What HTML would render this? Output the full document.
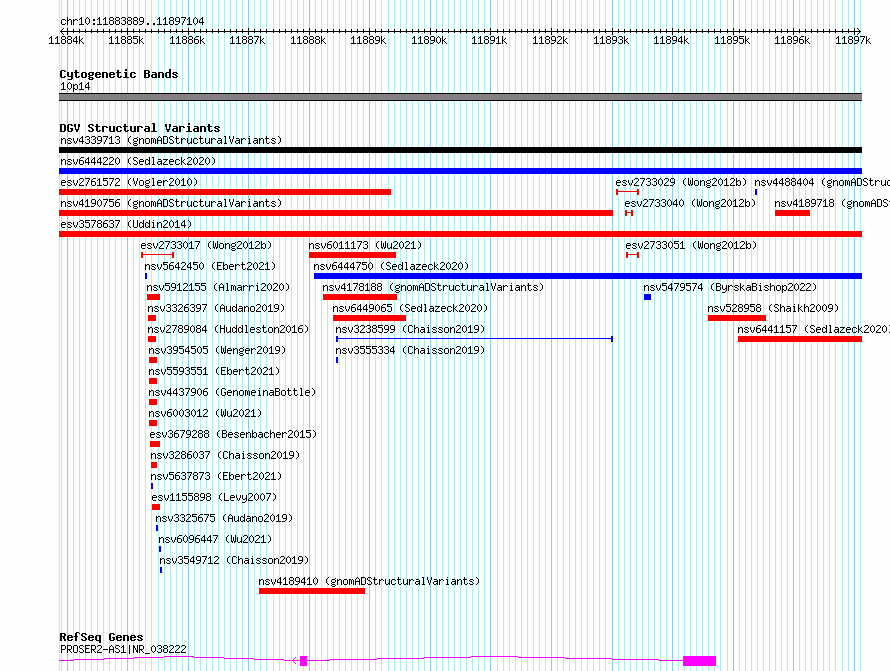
<!DOCTYPE html><html><head><meta charset="utf-8"><style>
html,body{margin:0;padding:0;background:#fcfefc;width:890px;height:671px;overflow:hidden}
svg{position:absolute;left:0;top:0}
</style></head><body>
<svg width="890" height="671" viewBox="0 0 890 671" shape-rendering="crispEdges">
<rect x="59" y="0" width="1" height="671" fill="#afeeee"/>
<rect x="61" y="0" width="1" height="671" fill="#afeeee"/>
<rect x="67" y="0" width="1" height="671" fill="#87ceeb"/>
<rect x="73" y="0" width="1" height="671" fill="#afeeee"/>
<rect x="79" y="0" width="1" height="671" fill="#afeeee"/>
<rect x="85" y="0" width="1" height="671" fill="#afeeee"/>
<rect x="91" y="0" width="1" height="671" fill="#afeeee"/>
<rect x="97" y="0" width="1" height="671" fill="#afeeee"/>
<rect x="103" y="0" width="1" height="671" fill="#afeeee"/>
<rect x="109" y="0" width="1" height="671" fill="#afeeee"/>
<rect x="115" y="0" width="1" height="671" fill="#afeeee"/>
<rect x="121" y="0" width="1" height="671" fill="#afeeee"/>
<rect x="127" y="0" width="1" height="671" fill="#87ceeb"/>
<rect x="133" y="0" width="1" height="671" fill="#afeeee"/>
<rect x="139" y="0" width="1" height="671" fill="#afeeee"/>
<rect x="145" y="0" width="1" height="671" fill="#afeeee"/>
<rect x="151" y="0" width="1" height="671" fill="#afeeee"/>
<rect x="158" y="0" width="1" height="671" fill="#afeeee"/>
<rect x="164" y="0" width="1" height="671" fill="#afeeee"/>
<rect x="170" y="0" width="1" height="671" fill="#afeeee"/>
<rect x="176" y="0" width="1" height="671" fill="#afeeee"/>
<rect x="182" y="0" width="1" height="671" fill="#afeeee"/>
<rect x="188" y="0" width="1" height="671" fill="#87ceeb"/>
<rect x="194" y="0" width="1" height="671" fill="#afeeee"/>
<rect x="200" y="0" width="1" height="671" fill="#afeeee"/>
<rect x="206" y="0" width="1" height="671" fill="#afeeee"/>
<rect x="212" y="0" width="1" height="671" fill="#afeeee"/>
<rect x="218" y="0" width="1" height="671" fill="#afeeee"/>
<rect x="224" y="0" width="1" height="671" fill="#afeeee"/>
<rect x="230" y="0" width="1" height="671" fill="#afeeee"/>
<rect x="236" y="0" width="1" height="671" fill="#afeeee"/>
<rect x="242" y="0" width="1" height="671" fill="#afeeee"/>
<rect x="248" y="0" width="1" height="671" fill="#87ceeb"/>
<rect x="254" y="0" width="1" height="671" fill="#afeeee"/>
<rect x="260" y="0" width="1" height="671" fill="#afeeee"/>
<rect x="266" y="0" width="1" height="671" fill="#afeeee"/>
<rect x="273" y="0" width="1" height="671" fill="#afeeee"/>
<rect x="279" y="0" width="1" height="671" fill="#afeeee"/>
<rect x="285" y="0" width="1" height="671" fill="#afeeee"/>
<rect x="291" y="0" width="1" height="671" fill="#afeeee"/>
<rect x="297" y="0" width="1" height="671" fill="#afeeee"/>
<rect x="303" y="0" width="1" height="671" fill="#afeeee"/>
<rect x="309" y="0" width="1" height="671" fill="#87ceeb"/>
<rect x="315" y="0" width="1" height="671" fill="#afeeee"/>
<rect x="321" y="0" width="1" height="671" fill="#afeeee"/>
<rect x="327" y="0" width="1" height="671" fill="#afeeee"/>
<rect x="333" y="0" width="1" height="671" fill="#afeeee"/>
<rect x="339" y="0" width="1" height="671" fill="#afeeee"/>
<rect x="345" y="0" width="1" height="671" fill="#afeeee"/>
<rect x="351" y="0" width="1" height="671" fill="#afeeee"/>
<rect x="357" y="0" width="1" height="671" fill="#afeeee"/>
<rect x="363" y="0" width="1" height="671" fill="#afeeee"/>
<rect x="369" y="0" width="1" height="671" fill="#87ceeb"/>
<rect x="375" y="0" width="1" height="671" fill="#afeeee"/>
<rect x="381" y="0" width="1" height="671" fill="#afeeee"/>
<rect x="388" y="0" width="1" height="671" fill="#afeeee"/>
<rect x="394" y="0" width="1" height="671" fill="#afeeee"/>
<rect x="400" y="0" width="1" height="671" fill="#afeeee"/>
<rect x="406" y="0" width="1" height="671" fill="#afeeee"/>
<rect x="412" y="0" width="1" height="671" fill="#afeeee"/>
<rect x="418" y="0" width="1" height="671" fill="#afeeee"/>
<rect x="424" y="0" width="1" height="671" fill="#afeeee"/>
<rect x="430" y="0" width="1" height="671" fill="#87ceeb"/>
<rect x="436" y="0" width="1" height="671" fill="#afeeee"/>
<rect x="442" y="0" width="1" height="671" fill="#afeeee"/>
<rect x="448" y="0" width="1" height="671" fill="#afeeee"/>
<rect x="454" y="0" width="1" height="671" fill="#afeeee"/>
<rect x="460" y="0" width="1" height="671" fill="#afeeee"/>
<rect x="466" y="0" width="1" height="671" fill="#afeeee"/>
<rect x="472" y="0" width="1" height="671" fill="#afeeee"/>
<rect x="478" y="0" width="1" height="671" fill="#afeeee"/>
<rect x="484" y="0" width="1" height="671" fill="#afeeee"/>
<rect x="490" y="0" width="1" height="671" fill="#87ceeb"/>
<rect x="497" y="0" width="1" height="671" fill="#afeeee"/>
<rect x="503" y="0" width="1" height="671" fill="#afeeee"/>
<rect x="509" y="0" width="1" height="671" fill="#afeeee"/>
<rect x="515" y="0" width="1" height="671" fill="#afeeee"/>
<rect x="521" y="0" width="1" height="671" fill="#afeeee"/>
<rect x="527" y="0" width="1" height="671" fill="#afeeee"/>
<rect x="533" y="0" width="1" height="671" fill="#afeeee"/>
<rect x="539" y="0" width="1" height="671" fill="#afeeee"/>
<rect x="545" y="0" width="1" height="671" fill="#afeeee"/>
<rect x="551" y="0" width="1" height="671" fill="#87ceeb"/>
<rect x="557" y="0" width="1" height="671" fill="#afeeee"/>
<rect x="563" y="0" width="1" height="671" fill="#afeeee"/>
<rect x="569" y="0" width="1" height="671" fill="#afeeee"/>
<rect x="575" y="0" width="1" height="671" fill="#afeeee"/>
<rect x="581" y="0" width="1" height="671" fill="#afeeee"/>
<rect x="587" y="0" width="1" height="671" fill="#afeeee"/>
<rect x="593" y="0" width="1" height="671" fill="#afeeee"/>
<rect x="599" y="0" width="1" height="671" fill="#afeeee"/>
<rect x="605" y="0" width="1" height="671" fill="#afeeee"/>
<rect x="612" y="0" width="1" height="671" fill="#87ceeb"/>
<rect x="618" y="0" width="1" height="671" fill="#afeeee"/>
<rect x="624" y="0" width="1" height="671" fill="#afeeee"/>
<rect x="630" y="0" width="1" height="671" fill="#afeeee"/>
<rect x="636" y="0" width="1" height="671" fill="#afeeee"/>
<rect x="642" y="0" width="1" height="671" fill="#afeeee"/>
<rect x="648" y="0" width="1" height="671" fill="#afeeee"/>
<rect x="654" y="0" width="1" height="671" fill="#afeeee"/>
<rect x="660" y="0" width="1" height="671" fill="#afeeee"/>
<rect x="666" y="0" width="1" height="671" fill="#afeeee"/>
<rect x="672" y="0" width="1" height="671" fill="#87ceeb"/>
<rect x="678" y="0" width="1" height="671" fill="#afeeee"/>
<rect x="684" y="0" width="1" height="671" fill="#afeeee"/>
<rect x="690" y="0" width="1" height="671" fill="#afeeee"/>
<rect x="696" y="0" width="1" height="671" fill="#afeeee"/>
<rect x="702" y="0" width="1" height="671" fill="#afeeee"/>
<rect x="708" y="0" width="1" height="671" fill="#afeeee"/>
<rect x="714" y="0" width="1" height="671" fill="#afeeee"/>
<rect x="720" y="0" width="1" height="671" fill="#afeeee"/>
<rect x="727" y="0" width="1" height="671" fill="#afeeee"/>
<rect x="733" y="0" width="1" height="671" fill="#87ceeb"/>
<rect x="739" y="0" width="1" height="671" fill="#afeeee"/>
<rect x="745" y="0" width="1" height="671" fill="#afeeee"/>
<rect x="751" y="0" width="1" height="671" fill="#afeeee"/>
<rect x="757" y="0" width="1" height="671" fill="#afeeee"/>
<rect x="763" y="0" width="1" height="671" fill="#afeeee"/>
<rect x="769" y="0" width="1" height="671" fill="#afeeee"/>
<rect x="775" y="0" width="1" height="671" fill="#afeeee"/>
<rect x="781" y="0" width="1" height="671" fill="#afeeee"/>
<rect x="787" y="0" width="1" height="671" fill="#afeeee"/>
<rect x="793" y="0" width="1" height="671" fill="#87ceeb"/>
<rect x="799" y="0" width="1" height="671" fill="#afeeee"/>
<rect x="805" y="0" width="1" height="671" fill="#afeeee"/>
<rect x="811" y="0" width="1" height="671" fill="#afeeee"/>
<rect x="817" y="0" width="1" height="671" fill="#afeeee"/>
<rect x="823" y="0" width="1" height="671" fill="#afeeee"/>
<rect x="829" y="0" width="1" height="671" fill="#afeeee"/>
<rect x="835" y="0" width="1" height="671" fill="#afeeee"/>
<rect x="842" y="0" width="1" height="671" fill="#afeeee"/>
<rect x="848" y="0" width="1" height="671" fill="#afeeee"/>
<rect x="854" y="0" width="1" height="671" fill="#87ceeb"/>
<rect x="860" y="0" width="1" height="671" fill="#afeeee"/>
<rect x="60" y="31" width="801" height="1" fill="#000000"/>
<rect x="67" y="28" width="1" height="7" fill="#000000"/>
<rect x="73" y="29" width="1" height="4" fill="#000000"/>
<rect x="79" y="29" width="1" height="4" fill="#000000"/>
<rect x="85" y="29" width="1" height="4" fill="#000000"/>
<rect x="91" y="29" width="1" height="4" fill="#000000"/>
<rect x="97" y="29" width="1" height="4" fill="#000000"/>
<rect x="103" y="29" width="1" height="4" fill="#000000"/>
<rect x="109" y="29" width="1" height="4" fill="#000000"/>
<rect x="115" y="29" width="1" height="4" fill="#000000"/>
<rect x="121" y="29" width="1" height="4" fill="#000000"/>
<rect x="127" y="28" width="1" height="7" fill="#000000"/>
<rect x="133" y="29" width="1" height="4" fill="#000000"/>
<rect x="139" y="29" width="1" height="4" fill="#000000"/>
<rect x="145" y="29" width="1" height="4" fill="#000000"/>
<rect x="151" y="29" width="1" height="4" fill="#000000"/>
<rect x="158" y="29" width="1" height="4" fill="#000000"/>
<rect x="164" y="29" width="1" height="4" fill="#000000"/>
<rect x="170" y="29" width="1" height="4" fill="#000000"/>
<rect x="176" y="29" width="1" height="4" fill="#000000"/>
<rect x="182" y="29" width="1" height="4" fill="#000000"/>
<rect x="188" y="28" width="1" height="7" fill="#000000"/>
<rect x="194" y="29" width="1" height="4" fill="#000000"/>
<rect x="200" y="29" width="1" height="4" fill="#000000"/>
<rect x="206" y="29" width="1" height="4" fill="#000000"/>
<rect x="212" y="29" width="1" height="4" fill="#000000"/>
<rect x="218" y="29" width="1" height="4" fill="#000000"/>
<rect x="224" y="29" width="1" height="4" fill="#000000"/>
<rect x="230" y="29" width="1" height="4" fill="#000000"/>
<rect x="236" y="29" width="1" height="4" fill="#000000"/>
<rect x="242" y="29" width="1" height="4" fill="#000000"/>
<rect x="248" y="28" width="1" height="7" fill="#000000"/>
<rect x="254" y="29" width="1" height="4" fill="#000000"/>
<rect x="260" y="29" width="1" height="4" fill="#000000"/>
<rect x="266" y="29" width="1" height="4" fill="#000000"/>
<rect x="273" y="29" width="1" height="4" fill="#000000"/>
<rect x="279" y="29" width="1" height="4" fill="#000000"/>
<rect x="285" y="29" width="1" height="4" fill="#000000"/>
<rect x="291" y="29" width="1" height="4" fill="#000000"/>
<rect x="297" y="29" width="1" height="4" fill="#000000"/>
<rect x="303" y="29" width="1" height="4" fill="#000000"/>
<rect x="309" y="28" width="1" height="7" fill="#000000"/>
<rect x="315" y="29" width="1" height="4" fill="#000000"/>
<rect x="321" y="29" width="1" height="4" fill="#000000"/>
<rect x="327" y="29" width="1" height="4" fill="#000000"/>
<rect x="333" y="29" width="1" height="4" fill="#000000"/>
<rect x="339" y="29" width="1" height="4" fill="#000000"/>
<rect x="345" y="29" width="1" height="4" fill="#000000"/>
<rect x="351" y="29" width="1" height="4" fill="#000000"/>
<rect x="357" y="29" width="1" height="4" fill="#000000"/>
<rect x="363" y="29" width="1" height="4" fill="#000000"/>
<rect x="369" y="28" width="1" height="7" fill="#000000"/>
<rect x="375" y="29" width="1" height="4" fill="#000000"/>
<rect x="381" y="29" width="1" height="4" fill="#000000"/>
<rect x="388" y="29" width="1" height="4" fill="#000000"/>
<rect x="394" y="29" width="1" height="4" fill="#000000"/>
<rect x="400" y="29" width="1" height="4" fill="#000000"/>
<rect x="406" y="29" width="1" height="4" fill="#000000"/>
<rect x="412" y="29" width="1" height="4" fill="#000000"/>
<rect x="418" y="29" width="1" height="4" fill="#000000"/>
<rect x="424" y="29" width="1" height="4" fill="#000000"/>
<rect x="430" y="28" width="1" height="7" fill="#000000"/>
<rect x="436" y="29" width="1" height="4" fill="#000000"/>
<rect x="442" y="29" width="1" height="4" fill="#000000"/>
<rect x="448" y="29" width="1" height="4" fill="#000000"/>
<rect x="454" y="29" width="1" height="4" fill="#000000"/>
<rect x="460" y="29" width="1" height="4" fill="#000000"/>
<rect x="466" y="29" width="1" height="4" fill="#000000"/>
<rect x="472" y="29" width="1" height="4" fill="#000000"/>
<rect x="478" y="29" width="1" height="4" fill="#000000"/>
<rect x="484" y="29" width="1" height="4" fill="#000000"/>
<rect x="490" y="28" width="1" height="7" fill="#000000"/>
<rect x="497" y="29" width="1" height="4" fill="#000000"/>
<rect x="503" y="29" width="1" height="4" fill="#000000"/>
<rect x="509" y="29" width="1" height="4" fill="#000000"/>
<rect x="515" y="29" width="1" height="4" fill="#000000"/>
<rect x="521" y="29" width="1" height="4" fill="#000000"/>
<rect x="527" y="29" width="1" height="4" fill="#000000"/>
<rect x="533" y="29" width="1" height="4" fill="#000000"/>
<rect x="539" y="29" width="1" height="4" fill="#000000"/>
<rect x="545" y="29" width="1" height="4" fill="#000000"/>
<rect x="551" y="28" width="1" height="7" fill="#000000"/>
<rect x="557" y="29" width="1" height="4" fill="#000000"/>
<rect x="563" y="29" width="1" height="4" fill="#000000"/>
<rect x="569" y="29" width="1" height="4" fill="#000000"/>
<rect x="575" y="29" width="1" height="4" fill="#000000"/>
<rect x="581" y="29" width="1" height="4" fill="#000000"/>
<rect x="587" y="29" width="1" height="4" fill="#000000"/>
<rect x="593" y="29" width="1" height="4" fill="#000000"/>
<rect x="599" y="29" width="1" height="4" fill="#000000"/>
<rect x="605" y="29" width="1" height="4" fill="#000000"/>
<rect x="612" y="28" width="1" height="7" fill="#000000"/>
<rect x="618" y="29" width="1" height="4" fill="#000000"/>
<rect x="624" y="29" width="1" height="4" fill="#000000"/>
<rect x="630" y="29" width="1" height="4" fill="#000000"/>
<rect x="636" y="29" width="1" height="4" fill="#000000"/>
<rect x="642" y="29" width="1" height="4" fill="#000000"/>
<rect x="648" y="29" width="1" height="4" fill="#000000"/>
<rect x="654" y="29" width="1" height="4" fill="#000000"/>
<rect x="660" y="29" width="1" height="4" fill="#000000"/>
<rect x="666" y="29" width="1" height="4" fill="#000000"/>
<rect x="672" y="28" width="1" height="7" fill="#000000"/>
<rect x="678" y="29" width="1" height="4" fill="#000000"/>
<rect x="684" y="29" width="1" height="4" fill="#000000"/>
<rect x="690" y="29" width="1" height="4" fill="#000000"/>
<rect x="696" y="29" width="1" height="4" fill="#000000"/>
<rect x="702" y="29" width="1" height="4" fill="#000000"/>
<rect x="708" y="29" width="1" height="4" fill="#000000"/>
<rect x="714" y="29" width="1" height="4" fill="#000000"/>
<rect x="720" y="29" width="1" height="4" fill="#000000"/>
<rect x="727" y="29" width="1" height="4" fill="#000000"/>
<rect x="733" y="28" width="1" height="7" fill="#000000"/>
<rect x="739" y="29" width="1" height="4" fill="#000000"/>
<rect x="745" y="29" width="1" height="4" fill="#000000"/>
<rect x="751" y="29" width="1" height="4" fill="#000000"/>
<rect x="757" y="29" width="1" height="4" fill="#000000"/>
<rect x="763" y="29" width="1" height="4" fill="#000000"/>
<rect x="769" y="29" width="1" height="4" fill="#000000"/>
<rect x="775" y="29" width="1" height="4" fill="#000000"/>
<rect x="781" y="29" width="1" height="4" fill="#000000"/>
<rect x="787" y="29" width="1" height="4" fill="#000000"/>
<rect x="793" y="28" width="1" height="7" fill="#000000"/>
<rect x="799" y="29" width="1" height="4" fill="#000000"/>
<rect x="805" y="29" width="1" height="4" fill="#000000"/>
<rect x="811" y="29" width="1" height="4" fill="#000000"/>
<rect x="817" y="29" width="1" height="4" fill="#000000"/>
<rect x="823" y="29" width="1" height="4" fill="#000000"/>
<rect x="829" y="29" width="1" height="4" fill="#000000"/>
<rect x="835" y="29" width="1" height="4" fill="#000000"/>
<rect x="842" y="29" width="1" height="4" fill="#000000"/>
<rect x="848" y="29" width="1" height="4" fill="#000000"/>
<rect x="854" y="28" width="1" height="7" fill="#000000"/>
<rect x="61" y="30" width="1" height="1" fill="#000000"/>
<rect x="61" y="32" width="1" height="1" fill="#000000"/>
<rect x="859" y="30" width="1" height="1" fill="#000000"/>
<rect x="859" y="32" width="1" height="1" fill="#000000"/>
<rect x="62" y="29" width="1" height="1" fill="#000000"/>
<rect x="62" y="33" width="1" height="1" fill="#000000"/>
<rect x="858" y="29" width="1" height="1" fill="#000000"/>
<rect x="858" y="33" width="1" height="1" fill="#000000"/>
<rect x="63" y="28" width="1" height="1" fill="#000000"/>
<rect x="63" y="34" width="1" height="1" fill="#000000"/>
<rect x="857" y="28" width="1" height="1" fill="#000000"/>
<rect x="857" y="34" width="1" height="1" fill="#000000"/>
<rect x="59" y="93" width="803" height="1" fill="#000000"/>
<rect x="59" y="100" width="803" height="1" fill="#000000"/>
<rect x="59" y="94" width="803" height="6" fill="#838083"/>
<rect x="59" y="147" width="803" height="6" fill="#000000"/>
<rect x="59" y="168" width="803" height="6" fill="#0000ff"/>
<rect x="59" y="189" width="332" height="6" fill="#ff0000"/>
<rect x="616" y="189" width="2" height="6" fill="#ff0000"/>
<rect x="637" y="189" width="2" height="6" fill="#ff0000"/>
<rect x="616" y="191" width="23" height="1" fill="#ff0000"/>
<rect x="755" y="189" width="2" height="6" fill="#0000ff"/>
<rect x="59" y="210" width="554" height="6" fill="#ff0000"/>
<rect x="625" y="210" width="2" height="6" fill="#ff0000"/>
<rect x="631" y="210" width="2" height="6" fill="#ff0000"/>
<rect x="625" y="212" width="8" height="1" fill="#ff0000"/>
<rect x="775" y="210" width="35" height="6" fill="#ff0000"/>
<rect x="59" y="231" width="803" height="6" fill="#ff0000"/>
<rect x="141" y="252" width="2" height="6" fill="#ff0000"/>
<rect x="172" y="252" width="2" height="6" fill="#ff0000"/>
<rect x="141" y="254" width="33" height="1" fill="#ff0000"/>
<rect x="309" y="252" width="87" height="6" fill="#ff0000"/>
<rect x="626" y="252" width="2" height="6" fill="#ff0000"/>
<rect x="637" y="252" width="2" height="6" fill="#ff0000"/>
<rect x="626" y="254" width="13" height="1" fill="#ff0000"/>
<rect x="145" y="273" width="2" height="6" fill="#0000ff"/>
<rect x="314" y="273" width="548" height="6" fill="#0000ff"/>
<rect x="147" y="294" width="13" height="6" fill="#ff0000"/>
<rect x="323" y="294" width="74" height="6" fill="#ff0000"/>
<rect x="644" y="294" width="7" height="6" fill="#0000ff"/>
<rect x="148" y="315" width="8" height="6" fill="#ff0000"/>
<rect x="333" y="315" width="73" height="6" fill="#ff0000"/>
<rect x="708" y="315" width="58" height="6" fill="#ff0000"/>
<rect x="148" y="336" width="8" height="6" fill="#ff0000"/>
<rect x="336" y="336" width="2" height="6" fill="#0000ff"/>
<rect x="611" y="336" width="2" height="6" fill="#0000ff"/>
<rect x="336" y="338" width="277" height="1" fill="#0000ff"/>
<rect x="738" y="336" width="124" height="6" fill="#ff0000"/>
<rect x="149" y="357" width="8" height="6" fill="#ff0000"/>
<rect x="336" y="357" width="2" height="6" fill="#0000ff"/>
<rect x="149" y="378" width="8" height="6" fill="#ff0000"/>
<rect x="149" y="399" width="8" height="6" fill="#ff0000"/>
<rect x="149" y="420" width="8" height="6" fill="#ff0000"/>
<rect x="150" y="441" width="10" height="6" fill="#ff0000"/>
<rect x="151" y="462" width="6" height="6" fill="#ff0000"/>
<rect x="151" y="483" width="2" height="6" fill="#0000ff"/>
<rect x="152" y="504" width="8" height="6" fill="#ff0000"/>
<rect x="156" y="525" width="2" height="6" fill="#0000ff"/>
<rect x="159" y="546" width="2" height="6" fill="#0000ff"/>
<rect x="160" y="567" width="2" height="6" fill="#0000ff"/>
<rect x="259" y="588" width="106" height="6" fill="#ff0000"/>
<rect x="59" y="660" width="15" height="1" fill="#ff00ff"/>
<rect x="74" y="659" width="30" height="1" fill="#ff00ff"/>
<rect x="104" y="658" width="30" height="1" fill="#ff00ff"/>
<rect x="134" y="657" width="30" height="1" fill="#ff00ff"/>
<rect x="164" y="656" width="30" height="1" fill="#ff00ff"/>
<rect x="194" y="657" width="30" height="1" fill="#ff00ff"/>
<rect x="224" y="658" width="30" height="1" fill="#ff00ff"/>
<rect x="254" y="659" width="30" height="1" fill="#ff00ff"/>
<rect x="284" y="660" width="16" height="1" fill="#ff00ff"/>
<rect x="307" y="660" width="23" height="1" fill="#ff00ff"/>
<rect x="330" y="659" width="47" height="1" fill="#ff00ff"/>
<rect x="377" y="658" width="47" height="1" fill="#ff00ff"/>
<rect x="424" y="657" width="47" height="1" fill="#ff00ff"/>
<rect x="471" y="656" width="47" height="1" fill="#ff00ff"/>
<rect x="518" y="657" width="47" height="1" fill="#ff00ff"/>
<rect x="565" y="658" width="47" height="1" fill="#ff00ff"/>
<rect x="612" y="659" width="47" height="1" fill="#ff00ff"/>
<rect x="659" y="660" width="24" height="1" fill="#ff00ff"/>
<rect x="300" y="656" width="7" height="10" fill="#ff00ff"/>
<rect x="683" y="656" width="33" height="10" fill="#ff00ff"/>
<rect x="293" y="659" width="1" height="1" fill="#ff00ff"/>
<rect x="293" y="661" width="1" height="1" fill="#ff00ff"/>
<rect x="294" y="658" width="1" height="1" fill="#ff00ff"/>
<rect x="294" y="662" width="1" height="1" fill="#ff00ff"/>
<rect x="295" y="657" width="1" height="1" fill="#ff00ff"/>
<rect x="295" y="663" width="1" height="1" fill="#ff00ff"/>
<defs><path id="r0" d="M4 0h1v1h-1zM3 1h1v1h-1zM2 2h1v1h-1zM2 3h1v1h-1zM2 4h1v1h-1zM2 5h1v1h-1zM3 6h1v1h-1zM4 7h1v1h-1z"/><path id="r1" d="M2 0h1v1h-1zM3 1h1v1h-1zM4 2h1v1h-1zM4 3h1v1h-1zM4 4h1v1h-1zM4 5h1v1h-1zM3 6h1v1h-1zM2 7h1v1h-1z"/><path id="r2" d="M1 4h5v1h-5z"/><path id="r3" d="M3 6h2v1h-2zM3 7h2v1h-2z"/><path id="r4" d="M3 0h1v1h-1zM2 1h1v1h-1zM4 1h1v1h-1zM1 2h1v1h-1zM5 2h1v1h-1zM1 3h1v1h-1zM5 3h1v1h-1zM1 4h1v1h-1zM5 4h1v1h-1zM1 5h1v1h-1zM5 5h1v1h-1zM2 6h1v1h-1zM4 6h1v1h-1zM3 7h1v1h-1z"/><path id="r5" d="M3 0h1v1h-1zM2 1h2v1h-2zM1 2h1v1h-1zM3 2h1v1h-1zM3 3h1v1h-1zM3 4h1v1h-1zM3 5h1v1h-1zM3 6h1v1h-1zM1 7h5v1h-5z"/><path id="r6" d="M2 0h3v1h-3zM1 1h1v1h-1zM5 1h1v1h-1zM5 2h1v1h-1zM4 3h1v1h-1zM3 4h1v1h-1zM2 5h1v1h-1zM1 6h1v1h-1zM1 7h5v1h-5z"/><path id="r7" d="M2 0h3v1h-3zM1 1h1v1h-1zM5 1h1v1h-1zM5 2h1v1h-1zM3 3h2v1h-2zM5 4h1v1h-1zM5 5h1v1h-1zM1 6h1v1h-1zM5 6h1v1h-1zM2 7h3v1h-3z"/><path id="r8" d="M4 0h1v1h-1zM3 1h2v1h-2zM2 2h1v1h-1zM4 2h1v1h-1zM1 3h1v1h-1zM4 3h1v1h-1zM1 4h1v1h-1zM4 4h1v1h-1zM1 5h5v1h-5zM4 6h1v1h-1zM4 7h1v1h-1z"/><path id="r9" d="M1 0h5v1h-5zM1 1h1v1h-1zM1 2h4v1h-4zM5 3h1v1h-1zM5 4h1v1h-1zM5 5h1v1h-1zM1 6h1v1h-1zM5 6h1v1h-1zM2 7h3v1h-3z"/><path id="r10" d="M3 0h3v1h-3zM2 1h1v1h-1zM1 2h1v1h-1zM1 3h4v1h-4zM1 4h1v1h-1zM5 4h1v1h-1zM1 5h1v1h-1zM5 5h1v1h-1zM1 6h1v1h-1zM5 6h1v1h-1zM2 7h3v1h-3z"/><path id="r11" d="M1 0h5v1h-5zM5 1h1v1h-1zM4 2h1v1h-1zM4 3h1v1h-1zM3 4h1v1h-1zM3 5h1v1h-1zM2 6h1v1h-1zM2 7h1v1h-1z"/><path id="r12" d="M2 0h3v1h-3zM1 1h1v1h-1zM5 1h1v1h-1zM1 2h1v1h-1zM5 2h1v1h-1zM2 3h3v1h-3zM1 4h1v1h-1zM5 4h1v1h-1zM1 5h1v1h-1zM5 5h1v1h-1zM1 6h1v1h-1zM5 6h1v1h-1zM2 7h3v1h-3z"/><path id="r13" d="M2 0h3v1h-3zM1 1h1v1h-1zM5 1h1v1h-1zM1 2h1v1h-1zM5 2h1v1h-1zM1 3h1v1h-1zM5 3h1v1h-1zM2 4h4v1h-4zM5 5h1v1h-1zM4 6h1v1h-1zM1 7h3v1h-3z"/><path id="r14" d="M3 2h2v1h-2zM3 3h2v1h-2zM3 6h2v1h-2zM3 7h2v1h-2z"/><path id="r15" d="M3 0h1v1h-1zM2 1h1v1h-1zM4 1h1v1h-1zM1 2h1v1h-1zM5 2h1v1h-1zM1 3h1v1h-1zM5 3h1v1h-1zM1 4h5v1h-5zM1 5h1v1h-1zM5 5h1v1h-1zM1 6h1v1h-1zM5 6h1v1h-1zM1 7h1v1h-1zM5 7h1v1h-1z"/><path id="r16" d="M1 0h4v1h-4zM1 1h1v1h-1zM5 1h1v1h-1zM1 2h1v1h-1zM5 2h1v1h-1zM1 3h4v1h-4zM1 4h1v1h-1zM5 4h1v1h-1zM1 5h1v1h-1zM5 5h1v1h-1zM1 6h1v1h-1zM5 6h1v1h-1zM1 7h4v1h-4z"/><path id="b17" d="M0 0h5v1h-5zM0 1h2v1h-2zM4 1h2v1h-2zM0 2h2v1h-2zM4 2h2v1h-2zM0 3h5v1h-5zM0 4h2v1h-2zM4 4h2v1h-2zM0 5h2v1h-2zM4 5h2v1h-2zM0 6h2v1h-2zM4 6h2v1h-2zM0 7h5v1h-5z"/><path id="r18" d="M2 0h3v1h-3zM1 1h1v1h-1zM5 1h1v1h-1zM1 2h1v1h-1zM1 3h1v1h-1zM1 4h1v1h-1zM1 5h1v1h-1zM1 6h1v1h-1zM5 6h1v1h-1zM2 7h3v1h-3z"/><path id="b19" d="M1 0h4v1h-4zM0 1h2v1h-2zM4 1h2v1h-2zM0 2h2v1h-2zM0 3h2v1h-2zM0 4h2v1h-2zM0 5h2v1h-2zM0 6h2v1h-2zM4 6h2v1h-2zM1 7h4v1h-4z"/><path id="r20" d="M1 0h4v1h-4zM1 1h1v1h-1zM5 1h1v1h-1zM1 2h1v1h-1zM5 2h1v1h-1zM1 3h1v1h-1zM5 3h1v1h-1zM1 4h1v1h-1zM5 4h1v1h-1zM1 5h1v1h-1zM5 5h1v1h-1zM1 6h1v1h-1zM5 6h1v1h-1zM1 7h4v1h-4z"/><path id="b21" d="M0 0h5v1h-5zM0 1h2v1h-2zM4 1h2v1h-2zM0 2h2v1h-2zM4 2h2v1h-2zM0 3h2v1h-2zM4 3h2v1h-2zM0 4h2v1h-2zM4 4h2v1h-2zM0 5h2v1h-2zM4 5h2v1h-2zM0 6h2v1h-2zM4 6h2v1h-2zM0 7h5v1h-5z"/><path id="r22" d="M1 0h5v1h-5zM1 1h1v1h-1zM1 2h1v1h-1zM1 3h4v1h-4zM1 4h1v1h-1zM1 5h1v1h-1zM1 6h1v1h-1zM1 7h5v1h-5z"/><path id="r23" d="M2 0h3v1h-3zM1 1h1v1h-1zM5 1h1v1h-1zM1 2h1v1h-1zM1 3h1v1h-1zM1 4h1v1h-1zM4 4h2v1h-2zM1 5h1v1h-1zM5 5h1v1h-1zM1 6h1v1h-1zM5 6h1v1h-1zM2 7h3v1h-3z"/><path id="b24" d="M1 0h4v1h-4zM0 1h2v1h-2zM4 1h2v1h-2zM0 2h2v1h-2zM0 3h2v1h-2zM0 4h2v1h-2zM3 4h3v1h-3zM0 5h2v1h-2zM4 5h2v1h-2zM0 6h2v1h-2zM4 6h2v1h-2zM1 7h4v1h-4z"/><path id="r25" d="M1 0h1v1h-1zM5 0h1v1h-1zM1 1h1v1h-1zM5 1h1v1h-1zM1 2h1v1h-1zM5 2h1v1h-1zM1 3h5v1h-5zM1 4h1v1h-1zM5 4h1v1h-1zM1 5h1v1h-1zM5 5h1v1h-1zM1 6h1v1h-1zM5 6h1v1h-1zM1 7h1v1h-1zM5 7h1v1h-1z"/><path id="r26" d="M1 0h1v1h-1zM1 1h1v1h-1zM1 2h1v1h-1zM1 3h1v1h-1zM1 4h1v1h-1zM1 5h1v1h-1zM1 6h1v1h-1zM1 7h5v1h-5z"/><path id="r27" d="M1 0h1v1h-1zM5 0h1v1h-1zM1 1h2v1h-2zM5 1h1v1h-1zM1 2h2v1h-2zM5 2h1v1h-1zM1 3h1v1h-1zM3 3h1v1h-1zM5 3h1v1h-1zM1 4h1v1h-1zM3 4h1v1h-1zM5 4h1v1h-1zM1 5h1v1h-1zM4 5h2v1h-2zM1 6h1v1h-1zM4 6h2v1h-2zM1 7h1v1h-1zM5 7h1v1h-1z"/><path id="r28" d="M2 0h3v1h-3zM1 1h1v1h-1zM5 1h1v1h-1zM1 2h1v1h-1zM5 2h1v1h-1zM1 3h1v1h-1zM5 3h1v1h-1zM1 4h1v1h-1zM5 4h1v1h-1zM1 5h1v1h-1zM5 5h1v1h-1zM1 6h1v1h-1zM5 6h1v1h-1zM2 7h3v1h-3z"/><path id="r29" d="M1 0h4v1h-4zM1 1h1v1h-1zM5 1h1v1h-1zM1 2h1v1h-1zM5 2h1v1h-1zM1 3h1v1h-1zM5 3h1v1h-1zM1 4h4v1h-4zM1 5h1v1h-1zM1 6h1v1h-1zM1 7h1v1h-1z"/><path id="r30" d="M1 0h4v1h-4zM1 1h1v1h-1zM5 1h1v1h-1zM1 2h1v1h-1zM5 2h1v1h-1zM1 3h1v1h-1zM5 3h1v1h-1zM1 4h4v1h-4zM1 5h1v1h-1zM3 5h1v1h-1zM1 6h1v1h-1zM4 6h1v1h-1zM1 7h1v1h-1zM5 7h1v1h-1z"/><path id="b31" d="M0 0h5v1h-5zM0 1h2v1h-2zM4 1h2v1h-2zM0 2h2v1h-2zM4 2h2v1h-2zM0 3h5v1h-5zM0 4h2v1h-2zM3 4h2v1h-2zM0 5h2v1h-2zM3 5h2v1h-2zM0 6h2v1h-2zM4 6h2v1h-2zM0 7h2v1h-2zM4 7h2v1h-2z"/><path id="r32" d="M2 0h3v1h-3zM1 1h1v1h-1zM5 1h1v1h-1zM1 2h1v1h-1zM2 3h2v1h-2zM4 4h1v1h-1zM5 5h1v1h-1zM1 6h1v1h-1zM5 6h1v1h-1zM2 7h3v1h-3z"/><path id="b33" d="M1 0h4v1h-4zM0 1h2v1h-2zM4 1h2v1h-2zM0 2h2v1h-2zM1 3h3v1h-3zM3 4h2v1h-2zM4 5h2v1h-2zM0 6h2v1h-2zM4 6h2v1h-2zM1 7h4v1h-4z"/><path id="r34" d="M1 0h1v1h-1zM5 0h1v1h-1zM1 1h1v1h-1zM5 1h1v1h-1zM1 2h1v1h-1zM5 2h1v1h-1zM1 3h1v1h-1zM5 3h1v1h-1zM1 4h1v1h-1zM5 4h1v1h-1zM1 5h1v1h-1zM5 5h1v1h-1zM1 6h1v1h-1zM5 6h1v1h-1zM2 7h3v1h-3z"/><path id="r35" d="M1 0h1v1h-1zM5 0h1v1h-1zM1 1h1v1h-1zM5 1h1v1h-1zM1 2h1v1h-1zM5 2h1v1h-1zM2 3h1v1h-1zM4 3h1v1h-1zM2 4h1v1h-1zM4 4h1v1h-1zM2 5h1v1h-1zM4 5h1v1h-1zM3 6h1v1h-1zM3 7h1v1h-1z"/><path id="b36" d="M0 0h2v1h-2zM4 0h2v1h-2zM0 1h2v1h-2zM4 1h2v1h-2zM0 2h2v1h-2zM4 2h2v1h-2zM1 3h1v1h-1zM4 3h1v1h-1zM1 4h1v1h-1zM4 4h1v1h-1zM1 5h4v1h-4zM2 6h2v1h-2zM2 7h2v1h-2z"/><path id="r37" d="M1 0h1v1h-1zM5 0h1v1h-1zM1 1h1v1h-1zM5 1h1v1h-1zM1 2h1v1h-1zM3 2h1v1h-1zM5 2h1v1h-1zM1 3h1v1h-1zM3 3h1v1h-1zM5 3h1v1h-1zM1 4h1v1h-1zM3 4h1v1h-1zM5 4h1v1h-1zM1 5h1v1h-1zM3 5h1v1h-1zM5 5h1v1h-1zM1 6h2v1h-2zM4 6h2v1h-2zM2 7h1v1h-1zM4 7h1v1h-1z"/><path id="r38" d="M1 8h5v1h-5z"/><path id="r39" d="M2 2h3v1h-3zM5 3h1v1h-1zM2 4h4v1h-4zM1 5h1v1h-1zM5 5h1v1h-1zM1 6h1v1h-1zM4 6h2v1h-2zM2 7h2v1h-2zM5 7h1v1h-1z"/><path id="b40" d="M1 2h4v1h-4zM4 3h2v1h-2zM1 4h5v1h-5zM0 5h2v1h-2zM4 5h2v1h-2zM0 6h2v1h-2zM4 6h2v1h-2zM1 7h5v1h-5z"/><path id="r41" d="M1 0h1v1h-1zM1 1h1v1h-1zM1 2h1v1h-1zM3 2h2v1h-2zM1 3h2v1h-2zM5 3h1v1h-1zM1 4h1v1h-1zM5 4h1v1h-1zM1 5h1v1h-1zM5 5h1v1h-1zM1 6h2v1h-2zM5 6h1v1h-1zM1 7h1v1h-1zM3 7h2v1h-2z"/><path id="r42" d="M2 2h3v1h-3zM1 3h1v1h-1zM5 3h1v1h-1zM1 4h1v1h-1zM1 5h1v1h-1zM1 6h1v1h-1zM5 6h1v1h-1zM2 7h3v1h-3z"/><path id="b43" d="M1 2h4v1h-4zM0 3h2v1h-2zM4 3h2v1h-2zM0 4h2v1h-2zM0 5h2v1h-2zM0 6h2v1h-2zM4 6h2v1h-2zM1 7h4v1h-4z"/><path id="r44" d="M5 0h1v1h-1zM5 1h1v1h-1zM2 2h2v1h-2zM5 2h1v1h-1zM1 3h1v1h-1zM4 3h2v1h-2zM1 4h1v1h-1zM5 4h1v1h-1zM1 5h1v1h-1zM5 5h1v1h-1zM1 6h1v1h-1zM4 6h2v1h-2zM2 7h2v1h-2zM5 7h1v1h-1z"/><path id="b45" d="M4 -1h2v1h-2zM4 0h2v1h-2zM4 1h2v1h-2zM1 2h5v1h-5zM0 3h2v1h-2zM4 3h2v1h-2zM0 4h2v1h-2zM4 4h2v1h-2zM0 5h2v1h-2zM4 5h2v1h-2zM0 6h2v1h-2zM4 6h2v1h-2zM1 7h5v1h-5z"/><path id="r46" d="M2 2h3v1h-3zM1 3h1v1h-1zM5 3h1v1h-1zM1 4h5v1h-5zM1 5h1v1h-1zM1 6h1v1h-1zM2 7h3v1h-3z"/><path id="b47" d="M1 2h4v1h-4zM0 3h2v1h-2zM4 3h2v1h-2zM0 4h6v1h-6zM0 5h2v1h-2zM0 6h2v1h-2zM4 6h2v1h-2zM1 7h4v1h-4z"/><path id="b48" d="M2 -1h3v1h-3zM1 0h2v1h-2zM5 0h1v1h-1zM1 1h2v1h-2zM1 2h2v1h-2zM0 3h4v1h-4zM1 4h2v1h-2zM1 5h2v1h-2zM1 6h2v1h-2zM1 7h2v1h-2z"/><path id="r49" d="M5 1h1v1h-1zM2 2h3v1h-3zM1 3h1v1h-1zM5 3h1v1h-1zM1 4h1v1h-1zM5 4h1v1h-1zM2 5h3v1h-3zM1 6h1v1h-1zM2 7h3v1h-3zM1 8h1v1h-1zM5 8h1v1h-1zM2 9h3v1h-3z"/><path id="b50" d="M1 2h5v1h-5zM0 3h2v1h-2zM4 3h2v1h-2zM0 4h2v1h-2zM4 4h2v1h-2zM1 5h4v1h-4zM0 6h2v1h-2zM1 7h4v1h-4zM0 8h2v1h-2zM4 8h2v1h-2zM1 9h4v1h-4z"/><path id="r51" d="M1 0h1v1h-1zM1 1h1v1h-1zM1 2h1v1h-1zM3 2h2v1h-2zM1 3h2v1h-2zM5 3h1v1h-1zM1 4h1v1h-1zM5 4h1v1h-1zM1 5h1v1h-1zM5 5h1v1h-1zM1 6h1v1h-1zM5 6h1v1h-1zM1 7h1v1h-1zM5 7h1v1h-1z"/><path id="r52" d="M3 0h1v1h-1zM2 2h2v1h-2zM3 3h1v1h-1zM3 4h1v1h-1zM3 5h1v1h-1zM3 6h1v1h-1zM2 7h3v1h-3z"/><path id="b53" d="M2 -1h2v1h-2zM2 0h2v1h-2zM1 2h3v1h-3zM2 3h2v1h-2zM2 4h2v1h-2zM2 5h2v1h-2zM2 6h2v1h-2zM0 7h6v1h-6z"/><path id="r54" d="M1 0h1v1h-1zM1 1h1v1h-1zM1 2h1v1h-1zM4 2h1v1h-1zM1 3h1v1h-1zM3 3h1v1h-1zM1 4h2v1h-2zM1 5h1v1h-1zM3 5h1v1h-1zM1 6h1v1h-1zM4 6h1v1h-1zM1 7h1v1h-1zM5 7h1v1h-1z"/><path id="r55" d="M2 0h2v1h-2zM3 1h1v1h-1zM3 2h1v1h-1zM3 3h1v1h-1zM3 4h1v1h-1zM3 5h1v1h-1zM3 6h1v1h-1zM2 7h3v1h-3z"/><path id="b56" d="M1 -1h3v1h-3zM2 0h2v1h-2zM2 1h2v1h-2zM2 2h2v1h-2zM2 3h2v1h-2zM2 4h2v1h-2zM2 5h2v1h-2zM2 6h2v1h-2zM0 7h6v1h-6z"/><path id="r57" d="M1 2h2v1h-2zM4 2h1v1h-1zM1 3h1v1h-1zM3 3h1v1h-1zM5 3h1v1h-1zM1 4h1v1h-1zM3 4h1v1h-1zM5 4h1v1h-1zM1 5h1v1h-1zM3 5h1v1h-1zM5 5h1v1h-1zM1 6h1v1h-1zM3 6h1v1h-1zM5 6h1v1h-1zM1 7h1v1h-1zM5 7h1v1h-1z"/><path id="r58" d="M1 2h1v1h-1zM3 2h2v1h-2zM1 3h2v1h-2zM5 3h1v1h-1zM1 4h1v1h-1zM5 4h1v1h-1zM1 5h1v1h-1zM5 5h1v1h-1zM1 6h1v1h-1zM5 6h1v1h-1zM1 7h1v1h-1zM5 7h1v1h-1z"/><path id="b59" d="M0 2h5v1h-5zM0 3h2v1h-2zM4 3h2v1h-2zM0 4h2v1h-2zM4 4h2v1h-2zM0 5h2v1h-2zM4 5h2v1h-2zM0 6h2v1h-2zM4 6h2v1h-2zM0 7h2v1h-2zM4 7h2v1h-2z"/><path id="r60" d="M2 2h3v1h-3zM1 3h1v1h-1zM5 3h1v1h-1zM1 4h1v1h-1zM5 4h1v1h-1zM1 5h1v1h-1zM5 5h1v1h-1zM1 6h1v1h-1zM5 6h1v1h-1zM2 7h3v1h-3z"/><path id="b61" d="M1 2h4v1h-4zM0 3h2v1h-2zM4 3h2v1h-2zM0 4h2v1h-2zM4 4h2v1h-2zM0 5h2v1h-2zM4 5h2v1h-2zM0 6h2v1h-2zM4 6h2v1h-2zM1 7h4v1h-4z"/><path id="r62" d="M1 2h1v1h-1zM3 2h2v1h-2zM1 3h2v1h-2zM5 3h1v1h-1zM1 4h1v1h-1zM5 4h1v1h-1zM1 5h1v1h-1zM5 5h1v1h-1zM1 6h2v1h-2zM5 6h1v1h-1zM1 7h1v1h-1zM3 7h2v1h-2zM1 8h1v1h-1zM1 9h1v1h-1z"/><path id="b63" d="M1 2h5v1h-5zM0 3h2v1h-2zM4 3h2v1h-2zM0 4h2v1h-2zM4 4h2v1h-2zM0 5h2v1h-2zM4 5h2v1h-2zM0 6h2v1h-2zM4 6h2v1h-2zM1 7h5v1h-5zM4 8h2v1h-2zM4 9h2v1h-2z"/><path id="r64" d="M1 2h1v1h-1zM3 2h2v1h-2zM1 3h2v1h-2zM5 3h1v1h-1zM1 4h1v1h-1zM1 5h1v1h-1zM1 6h1v1h-1zM1 7h1v1h-1z"/><path id="b65" d="M0 2h5v1h-5zM0 3h2v1h-2zM4 3h2v1h-2zM0 4h2v1h-2zM0 5h2v1h-2zM0 6h2v1h-2zM0 7h2v1h-2z"/><path id="r66" d="M2 2h3v1h-3zM1 3h1v1h-1zM5 3h1v1h-1zM2 4h2v1h-2zM4 5h1v1h-1zM1 6h1v1h-1zM5 6h1v1h-1zM2 7h3v1h-3z"/><path id="b67" d="M1 2h4v1h-4zM0 3h2v1h-2zM4 3h2v1h-2zM1 4h3v1h-3zM3 5h2v1h-2zM0 6h2v1h-2zM4 6h2v1h-2zM1 7h4v1h-4z"/><path id="r68" d="M2 0h1v1h-1zM2 1h1v1h-1zM1 2h4v1h-4zM2 3h1v1h-1zM2 4h1v1h-1zM2 5h1v1h-1zM2 6h1v1h-1zM5 6h1v1h-1zM3 7h2v1h-2z"/><path id="b69" d="M1 0h2v1h-2zM1 1h2v1h-2zM0 2h5v1h-5zM1 3h2v1h-2zM1 4h2v1h-2zM1 5h2v1h-2zM1 6h2v1h-2zM4 6h2v1h-2zM2 7h3v1h-3z"/><path id="r70" d="M1 2h1v1h-1zM5 2h1v1h-1zM1 3h1v1h-1zM5 3h1v1h-1zM1 4h1v1h-1zM5 4h1v1h-1zM1 5h1v1h-1zM5 5h1v1h-1zM1 6h1v1h-1zM4 6h2v1h-2zM2 7h2v1h-2zM5 7h1v1h-1z"/><path id="b71" d="M0 2h2v1h-2zM4 2h2v1h-2zM0 3h2v1h-2zM4 3h2v1h-2zM0 4h2v1h-2zM4 4h2v1h-2zM0 5h2v1h-2zM4 5h2v1h-2zM0 6h2v1h-2zM4 6h2v1h-2zM1 7h5v1h-5z"/><path id="r72" d="M1 2h1v1h-1zM5 2h1v1h-1zM1 3h1v1h-1zM5 3h1v1h-1zM1 4h1v1h-1zM5 4h1v1h-1zM2 5h1v1h-1zM4 5h1v1h-1zM2 6h1v1h-1zM4 6h1v1h-1zM3 7h1v1h-1z"/><path id="r73" d="M1 2h1v1h-1zM5 2h1v1h-1zM1 3h1v1h-1zM5 3h1v1h-1zM1 4h1v1h-1zM5 4h1v1h-1zM1 5h1v1h-1zM4 5h2v1h-2zM2 6h2v1h-2zM5 6h1v1h-1zM5 7h1v1h-1zM4 8h1v1h-1zM1 9h3v1h-3z"/><path id="b74" d="M0 2h2v1h-2zM4 2h2v1h-2zM0 3h2v1h-2zM4 3h2v1h-2zM0 4h2v1h-2zM4 4h2v1h-2zM0 5h2v1h-2zM4 5h2v1h-2zM1 6h5v1h-5zM4 7h2v1h-2zM4 8h2v1h-2zM1 9h4v1h-4z"/><path id="r75" d="M1 2h5v1h-5zM4 3h1v1h-1zM3 4h1v1h-1zM2 5h1v1h-1zM1 6h1v1h-1zM1 7h5v1h-5z"/><path id="r76" d="M3 0h1v1h-1zM3 1h1v1h-1zM3 2h1v1h-1zM3 3h1v1h-1zM3 4h1v1h-1zM3 5h1v1h-1zM3 6h1v1h-1zM3 7h1v1h-1zM3 8h1v1h-1z"/></defs><g fill="#000">
<use href="#r42" x="60" y="17"/>
<use href="#r51" x="66" y="17"/>
<use href="#r64" x="72" y="17"/>
<use href="#r5" x="78" y="17"/>
<use href="#r4" x="84" y="17"/>
<use href="#r14" x="90" y="17"/>
<use href="#r5" x="96" y="17"/>
<use href="#r5" x="102" y="17"/>
<use href="#r12" x="108" y="17"/>
<use href="#r12" x="114" y="17"/>
<use href="#r7" x="120" y="17"/>
<use href="#r12" x="126" y="17"/>
<use href="#r12" x="132" y="17"/>
<use href="#r13" x="138" y="17"/>
<use href="#r3" x="144" y="17"/>
<use href="#r3" x="150" y="17"/>
<use href="#r5" x="156" y="17"/>
<use href="#r5" x="162" y="17"/>
<use href="#r12" x="168" y="17"/>
<use href="#r13" x="174" y="17"/>
<use href="#r11" x="180" y="17"/>
<use href="#r5" x="186" y="17"/>
<use href="#r4" x="192" y="17"/>
<use href="#r8" x="198" y="17"/>
<use href="#r5" x="48" y="36"/>
<use href="#r5" x="54" y="36"/>
<use href="#r12" x="60" y="36"/>
<use href="#r12" x="66" y="36"/>
<use href="#r8" x="72" y="36"/>
<use href="#r54" x="78" y="36"/>
<use href="#r5" x="108" y="36"/>
<use href="#r5" x="114" y="36"/>
<use href="#r12" x="120" y="36"/>
<use href="#r12" x="126" y="36"/>
<use href="#r9" x="132" y="36"/>
<use href="#r54" x="138" y="36"/>
<use href="#r5" x="169" y="36"/>
<use href="#r5" x="175" y="36"/>
<use href="#r12" x="181" y="36"/>
<use href="#r12" x="187" y="36"/>
<use href="#r10" x="193" y="36"/>
<use href="#r54" x="199" y="36"/>
<use href="#r5" x="229" y="36"/>
<use href="#r5" x="235" y="36"/>
<use href="#r12" x="241" y="36"/>
<use href="#r12" x="247" y="36"/>
<use href="#r11" x="253" y="36"/>
<use href="#r54" x="259" y="36"/>
<use href="#r5" x="290" y="36"/>
<use href="#r5" x="296" y="36"/>
<use href="#r12" x="302" y="36"/>
<use href="#r12" x="308" y="36"/>
<use href="#r12" x="314" y="36"/>
<use href="#r54" x="320" y="36"/>
<use href="#r5" x="350" y="36"/>
<use href="#r5" x="356" y="36"/>
<use href="#r12" x="362" y="36"/>
<use href="#r12" x="368" y="36"/>
<use href="#r13" x="374" y="36"/>
<use href="#r54" x="380" y="36"/>
<use href="#r5" x="411" y="36"/>
<use href="#r5" x="417" y="36"/>
<use href="#r12" x="423" y="36"/>
<use href="#r13" x="429" y="36"/>
<use href="#r4" x="435" y="36"/>
<use href="#r54" x="441" y="36"/>
<use href="#r5" x="471" y="36"/>
<use href="#r5" x="477" y="36"/>
<use href="#r12" x="483" y="36"/>
<use href="#r13" x="489" y="36"/>
<use href="#r5" x="495" y="36"/>
<use href="#r54" x="501" y="36"/>
<use href="#r5" x="532" y="36"/>
<use href="#r5" x="538" y="36"/>
<use href="#r12" x="544" y="36"/>
<use href="#r13" x="550" y="36"/>
<use href="#r6" x="556" y="36"/>
<use href="#r54" x="562" y="36"/>
<use href="#r5" x="593" y="36"/>
<use href="#r5" x="599" y="36"/>
<use href="#r12" x="605" y="36"/>
<use href="#r13" x="611" y="36"/>
<use href="#r7" x="617" y="36"/>
<use href="#r54" x="623" y="36"/>
<use href="#r5" x="653" y="36"/>
<use href="#r5" x="659" y="36"/>
<use href="#r12" x="665" y="36"/>
<use href="#r13" x="671" y="36"/>
<use href="#r8" x="677" y="36"/>
<use href="#r54" x="683" y="36"/>
<use href="#r5" x="714" y="36"/>
<use href="#r5" x="720" y="36"/>
<use href="#r12" x="726" y="36"/>
<use href="#r13" x="732" y="36"/>
<use href="#r9" x="738" y="36"/>
<use href="#r54" x="744" y="36"/>
<use href="#r5" x="774" y="36"/>
<use href="#r5" x="780" y="36"/>
<use href="#r12" x="786" y="36"/>
<use href="#r13" x="792" y="36"/>
<use href="#r10" x="798" y="36"/>
<use href="#r54" x="804" y="36"/>
<use href="#r5" x="835" y="36"/>
<use href="#r5" x="841" y="36"/>
<use href="#r12" x="847" y="36"/>
<use href="#r13" x="853" y="36"/>
<use href="#r11" x="859" y="36"/>
<use href="#r54" x="865" y="36"/>
<use href="#b19" x="60" y="70"/>
<use href="#b74" x="67" y="70"/>
<use href="#b69" x="74" y="70"/>
<use href="#b61" x="81" y="70"/>
<use href="#b50" x="88" y="70"/>
<use href="#b47" x="95" y="70"/>
<use href="#b59" x="102" y="70"/>
<use href="#b47" x="109" y="70"/>
<use href="#b69" x="116" y="70"/>
<use href="#b53" x="123" y="70"/>
<use href="#b43" x="130" y="70"/>
<use href="#b17" x="144" y="70"/>
<use href="#b40" x="151" y="70"/>
<use href="#b59" x="158" y="70"/>
<use href="#b45" x="165" y="70"/>
<use href="#b67" x="172" y="70"/>
<use href="#r5" x="60" y="82"/>
<use href="#r4" x="66" y="82"/>
<use href="#r62" x="72" y="82"/>
<use href="#r5" x="78" y="82"/>
<use href="#r8" x="84" y="82"/>
<use href="#b21" x="60" y="124"/>
<use href="#b24" x="67" y="124"/>
<use href="#b36" x="74" y="124"/>
<use href="#b33" x="88" y="124"/>
<use href="#b69" x="95" y="124"/>
<use href="#b65" x="102" y="124"/>
<use href="#b71" x="109" y="124"/>
<use href="#b43" x="116" y="124"/>
<use href="#b69" x="123" y="124"/>
<use href="#b71" x="130" y="124"/>
<use href="#b65" x="137" y="124"/>
<use href="#b40" x="144" y="124"/>
<use href="#b56" x="151" y="124"/>
<use href="#b36" x="165" y="124"/>
<use href="#b40" x="172" y="124"/>
<use href="#b65" x="179" y="124"/>
<use href="#b53" x="186" y="124"/>
<use href="#b40" x="193" y="124"/>
<use href="#b59" x="200" y="124"/>
<use href="#b69" x="207" y="124"/>
<use href="#b67" x="214" y="124"/>
<use href="#r58" x="60" y="136"/>
<use href="#r66" x="66" y="136"/>
<use href="#r72" x="72" y="136"/>
<use href="#r8" x="78" y="136"/>
<use href="#r7" x="84" y="136"/>
<use href="#r7" x="90" y="136"/>
<use href="#r13" x="96" y="136"/>
<use href="#r11" x="102" y="136"/>
<use href="#r5" x="108" y="136"/>
<use href="#r7" x="114" y="136"/>
<use href="#r0" x="126" y="136"/>
<use href="#r49" x="132" y="136"/>
<use href="#r58" x="138" y="136"/>
<use href="#r60" x="144" y="136"/>
<use href="#r57" x="150" y="136"/>
<use href="#r15" x="156" y="136"/>
<use href="#r20" x="162" y="136"/>
<use href="#r32" x="168" y="136"/>
<use href="#r68" x="174" y="136"/>
<use href="#r64" x="180" y="136"/>
<use href="#r70" x="186" y="136"/>
<use href="#r42" x="192" y="136"/>
<use href="#r68" x="198" y="136"/>
<use href="#r70" x="204" y="136"/>
<use href="#r64" x="210" y="136"/>
<use href="#r39" x="216" y="136"/>
<use href="#r55" x="222" y="136"/>
<use href="#r35" x="228" y="136"/>
<use href="#r39" x="234" y="136"/>
<use href="#r64" x="240" y="136"/>
<use href="#r52" x="246" y="136"/>
<use href="#r39" x="252" y="136"/>
<use href="#r58" x="258" y="136"/>
<use href="#r68" x="264" y="136"/>
<use href="#r66" x="270" y="136"/>
<use href="#r1" x="276" y="136"/>
<use href="#r58" x="60" y="157"/>
<use href="#r66" x="66" y="157"/>
<use href="#r72" x="72" y="157"/>
<use href="#r10" x="78" y="157"/>
<use href="#r8" x="84" y="157"/>
<use href="#r8" x="90" y="157"/>
<use href="#r8" x="96" y="157"/>
<use href="#r6" x="102" y="157"/>
<use href="#r6" x="108" y="157"/>
<use href="#r4" x="114" y="157"/>
<use href="#r0" x="126" y="157"/>
<use href="#r32" x="132" y="157"/>
<use href="#r46" x="138" y="157"/>
<use href="#r44" x="144" y="157"/>
<use href="#r55" x="150" y="157"/>
<use href="#r39" x="156" y="157"/>
<use href="#r75" x="162" y="157"/>
<use href="#r46" x="168" y="157"/>
<use href="#r42" x="174" y="157"/>
<use href="#r54" x="180" y="157"/>
<use href="#r6" x="186" y="157"/>
<use href="#r4" x="192" y="157"/>
<use href="#r6" x="198" y="157"/>
<use href="#r4" x="204" y="157"/>
<use href="#r1" x="210" y="157"/>
<use href="#r46" x="60" y="178"/>
<use href="#r66" x="66" y="178"/>
<use href="#r72" x="72" y="178"/>
<use href="#r6" x="78" y="178"/>
<use href="#r11" x="84" y="178"/>
<use href="#r10" x="90" y="178"/>
<use href="#r5" x="96" y="178"/>
<use href="#r9" x="102" y="178"/>
<use href="#r11" x="108" y="178"/>
<use href="#r6" x="114" y="178"/>
<use href="#r0" x="126" y="178"/>
<use href="#r35" x="132" y="178"/>
<use href="#r60" x="138" y="178"/>
<use href="#r49" x="144" y="178"/>
<use href="#r55" x="150" y="178"/>
<use href="#r46" x="156" y="178"/>
<use href="#r64" x="162" y="178"/>
<use href="#r6" x="168" y="178"/>
<use href="#r4" x="174" y="178"/>
<use href="#r5" x="180" y="178"/>
<use href="#r4" x="186" y="178"/>
<use href="#r1" x="192" y="178"/>
<use href="#r46" x="615" y="178"/>
<use href="#r66" x="621" y="178"/>
<use href="#r72" x="627" y="178"/>
<use href="#r6" x="633" y="178"/>
<use href="#r11" x="639" y="178"/>
<use href="#r7" x="645" y="178"/>
<use href="#r7" x="651" y="178"/>
<use href="#r4" x="657" y="178"/>
<use href="#r6" x="663" y="178"/>
<use href="#r13" x="669" y="178"/>
<use href="#r0" x="681" y="178"/>
<use href="#r37" x="687" y="178"/>
<use href="#r60" x="693" y="178"/>
<use href="#r58" x="699" y="178"/>
<use href="#r49" x="705" y="178"/>
<use href="#r6" x="711" y="178"/>
<use href="#r4" x="717" y="178"/>
<use href="#r5" x="723" y="178"/>
<use href="#r6" x="729" y="178"/>
<use href="#r41" x="735" y="178"/>
<use href="#r1" x="741" y="178"/>
<use href="#r58" x="754" y="178"/>
<use href="#r66" x="760" y="178"/>
<use href="#r72" x="766" y="178"/>
<use href="#r8" x="772" y="178"/>
<use href="#r8" x="778" y="178"/>
<use href="#r12" x="784" y="178"/>
<use href="#r12" x="790" y="178"/>
<use href="#r8" x="796" y="178"/>
<use href="#r4" x="802" y="178"/>
<use href="#r8" x="808" y="178"/>
<use href="#r0" x="820" y="178"/>
<use href="#r49" x="826" y="178"/>
<use href="#r58" x="832" y="178"/>
<use href="#r60" x="838" y="178"/>
<use href="#r57" x="844" y="178"/>
<use href="#r15" x="850" y="178"/>
<use href="#r20" x="856" y="178"/>
<use href="#r32" x="862" y="178"/>
<use href="#r68" x="868" y="178"/>
<use href="#r64" x="874" y="178"/>
<use href="#r70" x="880" y="178"/>
<use href="#r42" x="886" y="178"/>
<use href="#r58" x="60" y="199"/>
<use href="#r66" x="66" y="199"/>
<use href="#r72" x="72" y="199"/>
<use href="#r8" x="78" y="199"/>
<use href="#r5" x="84" y="199"/>
<use href="#r13" x="90" y="199"/>
<use href="#r4" x="96" y="199"/>
<use href="#r11" x="102" y="199"/>
<use href="#r9" x="108" y="199"/>
<use href="#r10" x="114" y="199"/>
<use href="#r0" x="126" y="199"/>
<use href="#r49" x="132" y="199"/>
<use href="#r58" x="138" y="199"/>
<use href="#r60" x="144" y="199"/>
<use href="#r57" x="150" y="199"/>
<use href="#r15" x="156" y="199"/>
<use href="#r20" x="162" y="199"/>
<use href="#r32" x="168" y="199"/>
<use href="#r68" x="174" y="199"/>
<use href="#r64" x="180" y="199"/>
<use href="#r70" x="186" y="199"/>
<use href="#r42" x="192" y="199"/>
<use href="#r68" x="198" y="199"/>
<use href="#r70" x="204" y="199"/>
<use href="#r64" x="210" y="199"/>
<use href="#r39" x="216" y="199"/>
<use href="#r55" x="222" y="199"/>
<use href="#r35" x="228" y="199"/>
<use href="#r39" x="234" y="199"/>
<use href="#r64" x="240" y="199"/>
<use href="#r52" x="246" y="199"/>
<use href="#r39" x="252" y="199"/>
<use href="#r58" x="258" y="199"/>
<use href="#r68" x="264" y="199"/>
<use href="#r66" x="270" y="199"/>
<use href="#r1" x="276" y="199"/>
<use href="#r46" x="624" y="199"/>
<use href="#r66" x="630" y="199"/>
<use href="#r72" x="636" y="199"/>
<use href="#r6" x="642" y="199"/>
<use href="#r11" x="648" y="199"/>
<use href="#r7" x="654" y="199"/>
<use href="#r7" x="660" y="199"/>
<use href="#r4" x="666" y="199"/>
<use href="#r8" x="672" y="199"/>
<use href="#r4" x="678" y="199"/>
<use href="#r0" x="690" y="199"/>
<use href="#r37" x="696" y="199"/>
<use href="#r60" x="702" y="199"/>
<use href="#r58" x="708" y="199"/>
<use href="#r49" x="714" y="199"/>
<use href="#r6" x="720" y="199"/>
<use href="#r4" x="726" y="199"/>
<use href="#r5" x="732" y="199"/>
<use href="#r6" x="738" y="199"/>
<use href="#r41" x="744" y="199"/>
<use href="#r1" x="750" y="199"/>
<use href="#r58" x="774" y="199"/>
<use href="#r66" x="780" y="199"/>
<use href="#r72" x="786" y="199"/>
<use href="#r8" x="792" y="199"/>
<use href="#r5" x="798" y="199"/>
<use href="#r12" x="804" y="199"/>
<use href="#r13" x="810" y="199"/>
<use href="#r11" x="816" y="199"/>
<use href="#r5" x="822" y="199"/>
<use href="#r12" x="828" y="199"/>
<use href="#r0" x="840" y="199"/>
<use href="#r49" x="846" y="199"/>
<use href="#r58" x="852" y="199"/>
<use href="#r60" x="858" y="199"/>
<use href="#r57" x="864" y="199"/>
<use href="#r15" x="870" y="199"/>
<use href="#r20" x="876" y="199"/>
<use href="#r32" x="882" y="199"/>
<use href="#r68" x="888" y="199"/>
<use href="#r46" x="60" y="220"/>
<use href="#r66" x="66" y="220"/>
<use href="#r72" x="72" y="220"/>
<use href="#r7" x="78" y="220"/>
<use href="#r9" x="84" y="220"/>
<use href="#r11" x="90" y="220"/>
<use href="#r12" x="96" y="220"/>
<use href="#r10" x="102" y="220"/>
<use href="#r7" x="108" y="220"/>
<use href="#r11" x="114" y="220"/>
<use href="#r0" x="126" y="220"/>
<use href="#r34" x="132" y="220"/>
<use href="#r44" x="138" y="220"/>
<use href="#r44" x="144" y="220"/>
<use href="#r52" x="150" y="220"/>
<use href="#r58" x="156" y="220"/>
<use href="#r6" x="162" y="220"/>
<use href="#r4" x="168" y="220"/>
<use href="#r5" x="174" y="220"/>
<use href="#r8" x="180" y="220"/>
<use href="#r1" x="186" y="220"/>
<use href="#r46" x="140" y="241"/>
<use href="#r66" x="146" y="241"/>
<use href="#r72" x="152" y="241"/>
<use href="#r6" x="158" y="241"/>
<use href="#r11" x="164" y="241"/>
<use href="#r7" x="170" y="241"/>
<use href="#r7" x="176" y="241"/>
<use href="#r4" x="182" y="241"/>
<use href="#r5" x="188" y="241"/>
<use href="#r11" x="194" y="241"/>
<use href="#r0" x="206" y="241"/>
<use href="#r37" x="212" y="241"/>
<use href="#r60" x="218" y="241"/>
<use href="#r58" x="224" y="241"/>
<use href="#r49" x="230" y="241"/>
<use href="#r6" x="236" y="241"/>
<use href="#r4" x="242" y="241"/>
<use href="#r5" x="248" y="241"/>
<use href="#r6" x="254" y="241"/>
<use href="#r41" x="260" y="241"/>
<use href="#r1" x="266" y="241"/>
<use href="#r58" x="308" y="241"/>
<use href="#r66" x="314" y="241"/>
<use href="#r72" x="320" y="241"/>
<use href="#r10" x="326" y="241"/>
<use href="#r4" x="332" y="241"/>
<use href="#r5" x="338" y="241"/>
<use href="#r5" x="344" y="241"/>
<use href="#r5" x="350" y="241"/>
<use href="#r11" x="356" y="241"/>
<use href="#r7" x="362" y="241"/>
<use href="#r0" x="374" y="241"/>
<use href="#r37" x="380" y="241"/>
<use href="#r70" x="386" y="241"/>
<use href="#r6" x="392" y="241"/>
<use href="#r4" x="398" y="241"/>
<use href="#r6" x="404" y="241"/>
<use href="#r5" x="410" y="241"/>
<use href="#r1" x="416" y="241"/>
<use href="#r46" x="625" y="241"/>
<use href="#r66" x="631" y="241"/>
<use href="#r72" x="637" y="241"/>
<use href="#r6" x="643" y="241"/>
<use href="#r11" x="649" y="241"/>
<use href="#r7" x="655" y="241"/>
<use href="#r7" x="661" y="241"/>
<use href="#r4" x="667" y="241"/>
<use href="#r9" x="673" y="241"/>
<use href="#r5" x="679" y="241"/>
<use href="#r0" x="691" y="241"/>
<use href="#r37" x="697" y="241"/>
<use href="#r60" x="703" y="241"/>
<use href="#r58" x="709" y="241"/>
<use href="#r49" x="715" y="241"/>
<use href="#r6" x="721" y="241"/>
<use href="#r4" x="727" y="241"/>
<use href="#r5" x="733" y="241"/>
<use href="#r6" x="739" y="241"/>
<use href="#r41" x="745" y="241"/>
<use href="#r1" x="751" y="241"/>
<use href="#r58" x="144" y="262"/>
<use href="#r66" x="150" y="262"/>
<use href="#r72" x="156" y="262"/>
<use href="#r9" x="162" y="262"/>
<use href="#r10" x="168" y="262"/>
<use href="#r8" x="174" y="262"/>
<use href="#r6" x="180" y="262"/>
<use href="#r8" x="186" y="262"/>
<use href="#r9" x="192" y="262"/>
<use href="#r4" x="198" y="262"/>
<use href="#r0" x="210" y="262"/>
<use href="#r22" x="216" y="262"/>
<use href="#r41" x="222" y="262"/>
<use href="#r46" x="228" y="262"/>
<use href="#r64" x="234" y="262"/>
<use href="#r68" x="240" y="262"/>
<use href="#r6" x="246" y="262"/>
<use href="#r4" x="252" y="262"/>
<use href="#r6" x="258" y="262"/>
<use href="#r5" x="264" y="262"/>
<use href="#r1" x="270" y="262"/>
<use href="#r58" x="313" y="262"/>
<use href="#r66" x="319" y="262"/>
<use href="#r72" x="325" y="262"/>
<use href="#r10" x="331" y="262"/>
<use href="#r8" x="337" y="262"/>
<use href="#r8" x="343" y="262"/>
<use href="#r8" x="349" y="262"/>
<use href="#r11" x="355" y="262"/>
<use href="#r9" x="361" y="262"/>
<use href="#r4" x="367" y="262"/>
<use href="#r0" x="379" y="262"/>
<use href="#r32" x="385" y="262"/>
<use href="#r46" x="391" y="262"/>
<use href="#r44" x="397" y="262"/>
<use href="#r55" x="403" y="262"/>
<use href="#r39" x="409" y="262"/>
<use href="#r75" x="415" y="262"/>
<use href="#r46" x="421" y="262"/>
<use href="#r42" x="427" y="262"/>
<use href="#r54" x="433" y="262"/>
<use href="#r6" x="439" y="262"/>
<use href="#r4" x="445" y="262"/>
<use href="#r6" x="451" y="262"/>
<use href="#r4" x="457" y="262"/>
<use href="#r1" x="463" y="262"/>
<use href="#r58" x="146" y="283"/>
<use href="#r66" x="152" y="283"/>
<use href="#r72" x="158" y="283"/>
<use href="#r9" x="164" y="283"/>
<use href="#r13" x="170" y="283"/>
<use href="#r5" x="176" y="283"/>
<use href="#r6" x="182" y="283"/>
<use href="#r5" x="188" y="283"/>
<use href="#r9" x="194" y="283"/>
<use href="#r9" x="200" y="283"/>
<use href="#r0" x="212" y="283"/>
<use href="#r15" x="218" y="283"/>
<use href="#r55" x="224" y="283"/>
<use href="#r57" x="230" y="283"/>
<use href="#r39" x="236" y="283"/>
<use href="#r64" x="242" y="283"/>
<use href="#r64" x="248" y="283"/>
<use href="#r52" x="254" y="283"/>
<use href="#r6" x="260" y="283"/>
<use href="#r4" x="266" y="283"/>
<use href="#r6" x="272" y="283"/>
<use href="#r4" x="278" y="283"/>
<use href="#r1" x="284" y="283"/>
<use href="#r58" x="322" y="283"/>
<use href="#r66" x="328" y="283"/>
<use href="#r72" x="334" y="283"/>
<use href="#r8" x="340" y="283"/>
<use href="#r5" x="346" y="283"/>
<use href="#r11" x="352" y="283"/>
<use href="#r12" x="358" y="283"/>
<use href="#r5" x="364" y="283"/>
<use href="#r12" x="370" y="283"/>
<use href="#r12" x="376" y="283"/>
<use href="#r0" x="388" y="283"/>
<use href="#r49" x="394" y="283"/>
<use href="#r58" x="400" y="283"/>
<use href="#r60" x="406" y="283"/>
<use href="#r57" x="412" y="283"/>
<use href="#r15" x="418" y="283"/>
<use href="#r20" x="424" y="283"/>
<use href="#r32" x="430" y="283"/>
<use href="#r68" x="436" y="283"/>
<use href="#r64" x="442" y="283"/>
<use href="#r70" x="448" y="283"/>
<use href="#r42" x="454" y="283"/>
<use href="#r68" x="460" y="283"/>
<use href="#r70" x="466" y="283"/>
<use href="#r64" x="472" y="283"/>
<use href="#r39" x="478" y="283"/>
<use href="#r55" x="484" y="283"/>
<use href="#r35" x="490" y="283"/>
<use href="#r39" x="496" y="283"/>
<use href="#r64" x="502" y="283"/>
<use href="#r52" x="508" y="283"/>
<use href="#r39" x="514" y="283"/>
<use href="#r58" x="520" y="283"/>
<use href="#r68" x="526" y="283"/>
<use href="#r66" x="532" y="283"/>
<use href="#r1" x="538" y="283"/>
<use href="#r58" x="643" y="283"/>
<use href="#r66" x="649" y="283"/>
<use href="#r72" x="655" y="283"/>
<use href="#r9" x="661" y="283"/>
<use href="#r8" x="667" y="283"/>
<use href="#r11" x="673" y="283"/>
<use href="#r13" x="679" y="283"/>
<use href="#r9" x="685" y="283"/>
<use href="#r11" x="691" y="283"/>
<use href="#r8" x="697" y="283"/>
<use href="#r0" x="709" y="283"/>
<use href="#r16" x="715" y="283"/>
<use href="#r73" x="721" y="283"/>
<use href="#r64" x="727" y="283"/>
<use href="#r66" x="733" y="283"/>
<use href="#r54" x="739" y="283"/>
<use href="#r39" x="745" y="283"/>
<use href="#r16" x="751" y="283"/>
<use href="#r52" x="757" y="283"/>
<use href="#r66" x="763" y="283"/>
<use href="#r51" x="769" y="283"/>
<use href="#r60" x="775" y="283"/>
<use href="#r62" x="781" y="283"/>
<use href="#r6" x="787" y="283"/>
<use href="#r4" x="793" y="283"/>
<use href="#r6" x="799" y="283"/>
<use href="#r6" x="805" y="283"/>
<use href="#r1" x="811" y="283"/>
<use href="#r58" x="147" y="304"/>
<use href="#r66" x="153" y="304"/>
<use href="#r72" x="159" y="304"/>
<use href="#r7" x="165" y="304"/>
<use href="#r7" x="171" y="304"/>
<use href="#r6" x="177" y="304"/>
<use href="#r10" x="183" y="304"/>
<use href="#r7" x="189" y="304"/>
<use href="#r13" x="195" y="304"/>
<use href="#r11" x="201" y="304"/>
<use href="#r0" x="213" y="304"/>
<use href="#r15" x="219" y="304"/>
<use href="#r70" x="225" y="304"/>
<use href="#r44" x="231" y="304"/>
<use href="#r39" x="237" y="304"/>
<use href="#r58" x="243" y="304"/>
<use href="#r60" x="249" y="304"/>
<use href="#r6" x="255" y="304"/>
<use href="#r4" x="261" y="304"/>
<use href="#r5" x="267" y="304"/>
<use href="#r13" x="273" y="304"/>
<use href="#r1" x="279" y="304"/>
<use href="#r58" x="332" y="304"/>
<use href="#r66" x="338" y="304"/>
<use href="#r72" x="344" y="304"/>
<use href="#r10" x="350" y="304"/>
<use href="#r8" x="356" y="304"/>
<use href="#r8" x="362" y="304"/>
<use href="#r13" x="368" y="304"/>
<use href="#r4" x="374" y="304"/>
<use href="#r10" x="380" y="304"/>
<use href="#r9" x="386" y="304"/>
<use href="#r0" x="398" y="304"/>
<use href="#r32" x="404" y="304"/>
<use href="#r46" x="410" y="304"/>
<use href="#r44" x="416" y="304"/>
<use href="#r55" x="422" y="304"/>
<use href="#r39" x="428" y="304"/>
<use href="#r75" x="434" y="304"/>
<use href="#r46" x="440" y="304"/>
<use href="#r42" x="446" y="304"/>
<use href="#r54" x="452" y="304"/>
<use href="#r6" x="458" y="304"/>
<use href="#r4" x="464" y="304"/>
<use href="#r6" x="470" y="304"/>
<use href="#r4" x="476" y="304"/>
<use href="#r1" x="482" y="304"/>
<use href="#r58" x="707" y="304"/>
<use href="#r66" x="713" y="304"/>
<use href="#r72" x="719" y="304"/>
<use href="#r9" x="725" y="304"/>
<use href="#r6" x="731" y="304"/>
<use href="#r12" x="737" y="304"/>
<use href="#r13" x="743" y="304"/>
<use href="#r9" x="749" y="304"/>
<use href="#r12" x="755" y="304"/>
<use href="#r0" x="767" y="304"/>
<use href="#r32" x="773" y="304"/>
<use href="#r51" x="779" y="304"/>
<use href="#r39" x="785" y="304"/>
<use href="#r52" x="791" y="304"/>
<use href="#r54" x="797" y="304"/>
<use href="#r51" x="803" y="304"/>
<use href="#r6" x="809" y="304"/>
<use href="#r4" x="815" y="304"/>
<use href="#r4" x="821" y="304"/>
<use href="#r13" x="827" y="304"/>
<use href="#r1" x="833" y="304"/>
<use href="#r58" x="147" y="325"/>
<use href="#r66" x="153" y="325"/>
<use href="#r72" x="159" y="325"/>
<use href="#r6" x="165" y="325"/>
<use href="#r11" x="171" y="325"/>
<use href="#r12" x="177" y="325"/>
<use href="#r13" x="183" y="325"/>
<use href="#r4" x="189" y="325"/>
<use href="#r12" x="195" y="325"/>
<use href="#r8" x="201" y="325"/>
<use href="#r0" x="213" y="325"/>
<use href="#r25" x="219" y="325"/>
<use href="#r70" x="225" y="325"/>
<use href="#r44" x="231" y="325"/>
<use href="#r44" x="237" y="325"/>
<use href="#r55" x="243" y="325"/>
<use href="#r46" x="249" y="325"/>
<use href="#r66" x="255" y="325"/>
<use href="#r68" x="261" y="325"/>
<use href="#r60" x="267" y="325"/>
<use href="#r58" x="273" y="325"/>
<use href="#r6" x="279" y="325"/>
<use href="#r4" x="285" y="325"/>
<use href="#r5" x="291" y="325"/>
<use href="#r10" x="297" y="325"/>
<use href="#r1" x="303" y="325"/>
<use href="#r58" x="335" y="325"/>
<use href="#r66" x="341" y="325"/>
<use href="#r72" x="347" y="325"/>
<use href="#r7" x="353" y="325"/>
<use href="#r6" x="359" y="325"/>
<use href="#r7" x="365" y="325"/>
<use href="#r12" x="371" y="325"/>
<use href="#r9" x="377" y="325"/>
<use href="#r13" x="383" y="325"/>
<use href="#r13" x="389" y="325"/>
<use href="#r0" x="401" y="325"/>
<use href="#r18" x="407" y="325"/>
<use href="#r51" x="413" y="325"/>
<use href="#r39" x="419" y="325"/>
<use href="#r52" x="425" y="325"/>
<use href="#r66" x="431" y="325"/>
<use href="#r66" x="437" y="325"/>
<use href="#r60" x="443" y="325"/>
<use href="#r58" x="449" y="325"/>
<use href="#r6" x="455" y="325"/>
<use href="#r4" x="461" y="325"/>
<use href="#r5" x="467" y="325"/>
<use href="#r13" x="473" y="325"/>
<use href="#r1" x="479" y="325"/>
<use href="#r58" x="737" y="325"/>
<use href="#r66" x="743" y="325"/>
<use href="#r72" x="749" y="325"/>
<use href="#r10" x="755" y="325"/>
<use href="#r8" x="761" y="325"/>
<use href="#r8" x="767" y="325"/>
<use href="#r5" x="773" y="325"/>
<use href="#r5" x="779" y="325"/>
<use href="#r9" x="785" y="325"/>
<use href="#r11" x="791" y="325"/>
<use href="#r0" x="803" y="325"/>
<use href="#r32" x="809" y="325"/>
<use href="#r46" x="815" y="325"/>
<use href="#r44" x="821" y="325"/>
<use href="#r55" x="827" y="325"/>
<use href="#r39" x="833" y="325"/>
<use href="#r75" x="839" y="325"/>
<use href="#r46" x="845" y="325"/>
<use href="#r42" x="851" y="325"/>
<use href="#r54" x="857" y="325"/>
<use href="#r6" x="863" y="325"/>
<use href="#r4" x="869" y="325"/>
<use href="#r6" x="875" y="325"/>
<use href="#r4" x="881" y="325"/>
<use href="#r1" x="887" y="325"/>
<use href="#r58" x="148" y="346"/>
<use href="#r66" x="154" y="346"/>
<use href="#r72" x="160" y="346"/>
<use href="#r7" x="166" y="346"/>
<use href="#r13" x="172" y="346"/>
<use href="#r9" x="178" y="346"/>
<use href="#r8" x="184" y="346"/>
<use href="#r9" x="190" y="346"/>
<use href="#r4" x="196" y="346"/>
<use href="#r9" x="202" y="346"/>
<use href="#r0" x="214" y="346"/>
<use href="#r37" x="220" y="346"/>
<use href="#r46" x="226" y="346"/>
<use href="#r58" x="232" y="346"/>
<use href="#r49" x="238" y="346"/>
<use href="#r46" x="244" y="346"/>
<use href="#r64" x="250" y="346"/>
<use href="#r6" x="256" y="346"/>
<use href="#r4" x="262" y="346"/>
<use href="#r5" x="268" y="346"/>
<use href="#r13" x="274" y="346"/>
<use href="#r1" x="280" y="346"/>
<use href="#r58" x="335" y="346"/>
<use href="#r66" x="341" y="346"/>
<use href="#r72" x="347" y="346"/>
<use href="#r7" x="353" y="346"/>
<use href="#r9" x="359" y="346"/>
<use href="#r9" x="365" y="346"/>
<use href="#r9" x="371" y="346"/>
<use href="#r7" x="377" y="346"/>
<use href="#r7" x="383" y="346"/>
<use href="#r8" x="389" y="346"/>
<use href="#r0" x="401" y="346"/>
<use href="#r18" x="407" y="346"/>
<use href="#r51" x="413" y="346"/>
<use href="#r39" x="419" y="346"/>
<use href="#r52" x="425" y="346"/>
<use href="#r66" x="431" y="346"/>
<use href="#r66" x="437" y="346"/>
<use href="#r60" x="443" y="346"/>
<use href="#r58" x="449" y="346"/>
<use href="#r6" x="455" y="346"/>
<use href="#r4" x="461" y="346"/>
<use href="#r5" x="467" y="346"/>
<use href="#r13" x="473" y="346"/>
<use href="#r1" x="479" y="346"/>
<use href="#r58" x="148" y="367"/>
<use href="#r66" x="154" y="367"/>
<use href="#r72" x="160" y="367"/>
<use href="#r9" x="166" y="367"/>
<use href="#r9" x="172" y="367"/>
<use href="#r13" x="178" y="367"/>
<use href="#r7" x="184" y="367"/>
<use href="#r9" x="190" y="367"/>
<use href="#r9" x="196" y="367"/>
<use href="#r5" x="202" y="367"/>
<use href="#r0" x="214" y="367"/>
<use href="#r22" x="220" y="367"/>
<use href="#r41" x="226" y="367"/>
<use href="#r46" x="232" y="367"/>
<use href="#r64" x="238" y="367"/>
<use href="#r68" x="244" y="367"/>
<use href="#r6" x="250" y="367"/>
<use href="#r4" x="256" y="367"/>
<use href="#r6" x="262" y="367"/>
<use href="#r5" x="268" y="367"/>
<use href="#r1" x="274" y="367"/>
<use href="#r58" x="148" y="388"/>
<use href="#r66" x="154" y="388"/>
<use href="#r72" x="160" y="388"/>
<use href="#r8" x="166" y="388"/>
<use href="#r8" x="172" y="388"/>
<use href="#r7" x="178" y="388"/>
<use href="#r11" x="184" y="388"/>
<use href="#r13" x="190" y="388"/>
<use href="#r4" x="196" y="388"/>
<use href="#r10" x="202" y="388"/>
<use href="#r0" x="214" y="388"/>
<use href="#r23" x="220" y="388"/>
<use href="#r46" x="226" y="388"/>
<use href="#r58" x="232" y="388"/>
<use href="#r60" x="238" y="388"/>
<use href="#r57" x="244" y="388"/>
<use href="#r46" x="250" y="388"/>
<use href="#r52" x="256" y="388"/>
<use href="#r58" x="262" y="388"/>
<use href="#r39" x="268" y="388"/>
<use href="#r16" x="274" y="388"/>
<use href="#r60" x="280" y="388"/>
<use href="#r68" x="286" y="388"/>
<use href="#r68" x="292" y="388"/>
<use href="#r55" x="298" y="388"/>
<use href="#r46" x="304" y="388"/>
<use href="#r1" x="310" y="388"/>
<use href="#r58" x="148" y="409"/>
<use href="#r66" x="154" y="409"/>
<use href="#r72" x="160" y="409"/>
<use href="#r10" x="166" y="409"/>
<use href="#r4" x="172" y="409"/>
<use href="#r4" x="178" y="409"/>
<use href="#r7" x="184" y="409"/>
<use href="#r4" x="190" y="409"/>
<use href="#r5" x="196" y="409"/>
<use href="#r6" x="202" y="409"/>
<use href="#r0" x="214" y="409"/>
<use href="#r37" x="220" y="409"/>
<use href="#r70" x="226" y="409"/>
<use href="#r6" x="232" y="409"/>
<use href="#r4" x="238" y="409"/>
<use href="#r6" x="244" y="409"/>
<use href="#r5" x="250" y="409"/>
<use href="#r1" x="256" y="409"/>
<use href="#r46" x="149" y="430"/>
<use href="#r66" x="155" y="430"/>
<use href="#r72" x="161" y="430"/>
<use href="#r7" x="167" y="430"/>
<use href="#r10" x="173" y="430"/>
<use href="#r11" x="179" y="430"/>
<use href="#r13" x="185" y="430"/>
<use href="#r6" x="191" y="430"/>
<use href="#r12" x="197" y="430"/>
<use href="#r12" x="203" y="430"/>
<use href="#r0" x="215" y="430"/>
<use href="#r16" x="221" y="430"/>
<use href="#r46" x="227" y="430"/>
<use href="#r66" x="233" y="430"/>
<use href="#r46" x="239" y="430"/>
<use href="#r58" x="245" y="430"/>
<use href="#r41" x="251" y="430"/>
<use href="#r39" x="257" y="430"/>
<use href="#r42" x="263" y="430"/>
<use href="#r51" x="269" y="430"/>
<use href="#r46" x="275" y="430"/>
<use href="#r64" x="281" y="430"/>
<use href="#r6" x="287" y="430"/>
<use href="#r4" x="293" y="430"/>
<use href="#r5" x="299" y="430"/>
<use href="#r9" x="305" y="430"/>
<use href="#r1" x="311" y="430"/>
<use href="#r58" x="150" y="451"/>
<use href="#r66" x="156" y="451"/>
<use href="#r72" x="162" y="451"/>
<use href="#r7" x="168" y="451"/>
<use href="#r6" x="174" y="451"/>
<use href="#r12" x="180" y="451"/>
<use href="#r10" x="186" y="451"/>
<use href="#r4" x="192" y="451"/>
<use href="#r7" x="198" y="451"/>
<use href="#r11" x="204" y="451"/>
<use href="#r0" x="216" y="451"/>
<use href="#r18" x="222" y="451"/>
<use href="#r51" x="228" y="451"/>
<use href="#r39" x="234" y="451"/>
<use href="#r52" x="240" y="451"/>
<use href="#r66" x="246" y="451"/>
<use href="#r66" x="252" y="451"/>
<use href="#r60" x="258" y="451"/>
<use href="#r58" x="264" y="451"/>
<use href="#r6" x="270" y="451"/>
<use href="#r4" x="276" y="451"/>
<use href="#r5" x="282" y="451"/>
<use href="#r13" x="288" y="451"/>
<use href="#r1" x="294" y="451"/>
<use href="#r58" x="150" y="472"/>
<use href="#r66" x="156" y="472"/>
<use href="#r72" x="162" y="472"/>
<use href="#r9" x="168" y="472"/>
<use href="#r10" x="174" y="472"/>
<use href="#r7" x="180" y="472"/>
<use href="#r11" x="186" y="472"/>
<use href="#r12" x="192" y="472"/>
<use href="#r11" x="198" y="472"/>
<use href="#r7" x="204" y="472"/>
<use href="#r0" x="216" y="472"/>
<use href="#r22" x="222" y="472"/>
<use href="#r41" x="228" y="472"/>
<use href="#r46" x="234" y="472"/>
<use href="#r64" x="240" y="472"/>
<use href="#r68" x="246" y="472"/>
<use href="#r6" x="252" y="472"/>
<use href="#r4" x="258" y="472"/>
<use href="#r6" x="264" y="472"/>
<use href="#r5" x="270" y="472"/>
<use href="#r1" x="276" y="472"/>
<use href="#r46" x="151" y="493"/>
<use href="#r66" x="157" y="493"/>
<use href="#r72" x="163" y="493"/>
<use href="#r5" x="169" y="493"/>
<use href="#r5" x="175" y="493"/>
<use href="#r9" x="181" y="493"/>
<use href="#r9" x="187" y="493"/>
<use href="#r12" x="193" y="493"/>
<use href="#r13" x="199" y="493"/>
<use href="#r12" x="205" y="493"/>
<use href="#r0" x="217" y="493"/>
<use href="#r26" x="223" y="493"/>
<use href="#r46" x="229" y="493"/>
<use href="#r72" x="235" y="493"/>
<use href="#r73" x="241" y="493"/>
<use href="#r6" x="247" y="493"/>
<use href="#r4" x="253" y="493"/>
<use href="#r4" x="259" y="493"/>
<use href="#r11" x="265" y="493"/>
<use href="#r1" x="271" y="493"/>
<use href="#r58" x="155" y="514"/>
<use href="#r66" x="161" y="514"/>
<use href="#r72" x="167" y="514"/>
<use href="#r7" x="173" y="514"/>
<use href="#r7" x="179" y="514"/>
<use href="#r6" x="185" y="514"/>
<use href="#r9" x="191" y="514"/>
<use href="#r10" x="197" y="514"/>
<use href="#r11" x="203" y="514"/>
<use href="#r9" x="209" y="514"/>
<use href="#r0" x="221" y="514"/>
<use href="#r15" x="227" y="514"/>
<use href="#r70" x="233" y="514"/>
<use href="#r44" x="239" y="514"/>
<use href="#r39" x="245" y="514"/>
<use href="#r58" x="251" y="514"/>
<use href="#r60" x="257" y="514"/>
<use href="#r6" x="263" y="514"/>
<use href="#r4" x="269" y="514"/>
<use href="#r5" x="275" y="514"/>
<use href="#r13" x="281" y="514"/>
<use href="#r1" x="287" y="514"/>
<use href="#r58" x="158" y="535"/>
<use href="#r66" x="164" y="535"/>
<use href="#r72" x="170" y="535"/>
<use href="#r10" x="176" y="535"/>
<use href="#r4" x="182" y="535"/>
<use href="#r13" x="188" y="535"/>
<use href="#r10" x="194" y="535"/>
<use href="#r8" x="200" y="535"/>
<use href="#r8" x="206" y="535"/>
<use href="#r11" x="212" y="535"/>
<use href="#r0" x="224" y="535"/>
<use href="#r37" x="230" y="535"/>
<use href="#r70" x="236" y="535"/>
<use href="#r6" x="242" y="535"/>
<use href="#r4" x="248" y="535"/>
<use href="#r6" x="254" y="535"/>
<use href="#r5" x="260" y="535"/>
<use href="#r1" x="266" y="535"/>
<use href="#r58" x="159" y="556"/>
<use href="#r66" x="165" y="556"/>
<use href="#r72" x="171" y="556"/>
<use href="#r7" x="177" y="556"/>
<use href="#r9" x="183" y="556"/>
<use href="#r8" x="189" y="556"/>
<use href="#r13" x="195" y="556"/>
<use href="#r11" x="201" y="556"/>
<use href="#r5" x="207" y="556"/>
<use href="#r6" x="213" y="556"/>
<use href="#r0" x="225" y="556"/>
<use href="#r18" x="231" y="556"/>
<use href="#r51" x="237" y="556"/>
<use href="#r39" x="243" y="556"/>
<use href="#r52" x="249" y="556"/>
<use href="#r66" x="255" y="556"/>
<use href="#r66" x="261" y="556"/>
<use href="#r60" x="267" y="556"/>
<use href="#r58" x="273" y="556"/>
<use href="#r6" x="279" y="556"/>
<use href="#r4" x="285" y="556"/>
<use href="#r5" x="291" y="556"/>
<use href="#r13" x="297" y="556"/>
<use href="#r1" x="303" y="556"/>
<use href="#r58" x="258" y="577"/>
<use href="#r66" x="264" y="577"/>
<use href="#r72" x="270" y="577"/>
<use href="#r8" x="276" y="577"/>
<use href="#r5" x="282" y="577"/>
<use href="#r12" x="288" y="577"/>
<use href="#r13" x="294" y="577"/>
<use href="#r8" x="300" y="577"/>
<use href="#r5" x="306" y="577"/>
<use href="#r4" x="312" y="577"/>
<use href="#r0" x="324" y="577"/>
<use href="#r49" x="330" y="577"/>
<use href="#r58" x="336" y="577"/>
<use href="#r60" x="342" y="577"/>
<use href="#r57" x="348" y="577"/>
<use href="#r15" x="354" y="577"/>
<use href="#r20" x="360" y="577"/>
<use href="#r32" x="366" y="577"/>
<use href="#r68" x="372" y="577"/>
<use href="#r64" x="378" y="577"/>
<use href="#r70" x="384" y="577"/>
<use href="#r42" x="390" y="577"/>
<use href="#r68" x="396" y="577"/>
<use href="#r70" x="402" y="577"/>
<use href="#r64" x="408" y="577"/>
<use href="#r39" x="414" y="577"/>
<use href="#r55" x="420" y="577"/>
<use href="#r35" x="426" y="577"/>
<use href="#r39" x="432" y="577"/>
<use href="#r64" x="438" y="577"/>
<use href="#r52" x="444" y="577"/>
<use href="#r39" x="450" y="577"/>
<use href="#r58" x="456" y="577"/>
<use href="#r68" x="462" y="577"/>
<use href="#r66" x="468" y="577"/>
<use href="#r1" x="474" y="577"/>
<use href="#b31" x="60" y="633"/>
<use href="#b47" x="67" y="633"/>
<use href="#b48" x="74" y="633"/>
<use href="#b33" x="81" y="633"/>
<use href="#b47" x="88" y="633"/>
<use href="#b63" x="95" y="633"/>
<use href="#b24" x="109" y="633"/>
<use href="#b47" x="116" y="633"/>
<use href="#b59" x="123" y="633"/>
<use href="#b47" x="130" y="633"/>
<use href="#b67" x="137" y="633"/>
<use href="#r29" x="60" y="645"/>
<use href="#r30" x="66" y="645"/>
<use href="#r28" x="72" y="645"/>
<use href="#r32" x="78" y="645"/>
<use href="#r22" x="84" y="645"/>
<use href="#r30" x="90" y="645"/>
<use href="#r6" x="96" y="645"/>
<use href="#r2" x="102" y="645"/>
<use href="#r15" x="108" y="645"/>
<use href="#r32" x="114" y="645"/>
<use href="#r5" x="120" y="645"/>
<use href="#r76" x="126" y="645"/>
<use href="#r27" x="132" y="645"/>
<use href="#r30" x="138" y="645"/>
<use href="#r38" x="144" y="645"/>
<use href="#r4" x="150" y="645"/>
<use href="#r7" x="156" y="645"/>
<use href="#r12" x="162" y="645"/>
<use href="#r6" x="168" y="645"/>
<use href="#r6" x="174" y="645"/>
<use href="#r6" x="180" y="645"/>
</g></svg>
</body></html>
